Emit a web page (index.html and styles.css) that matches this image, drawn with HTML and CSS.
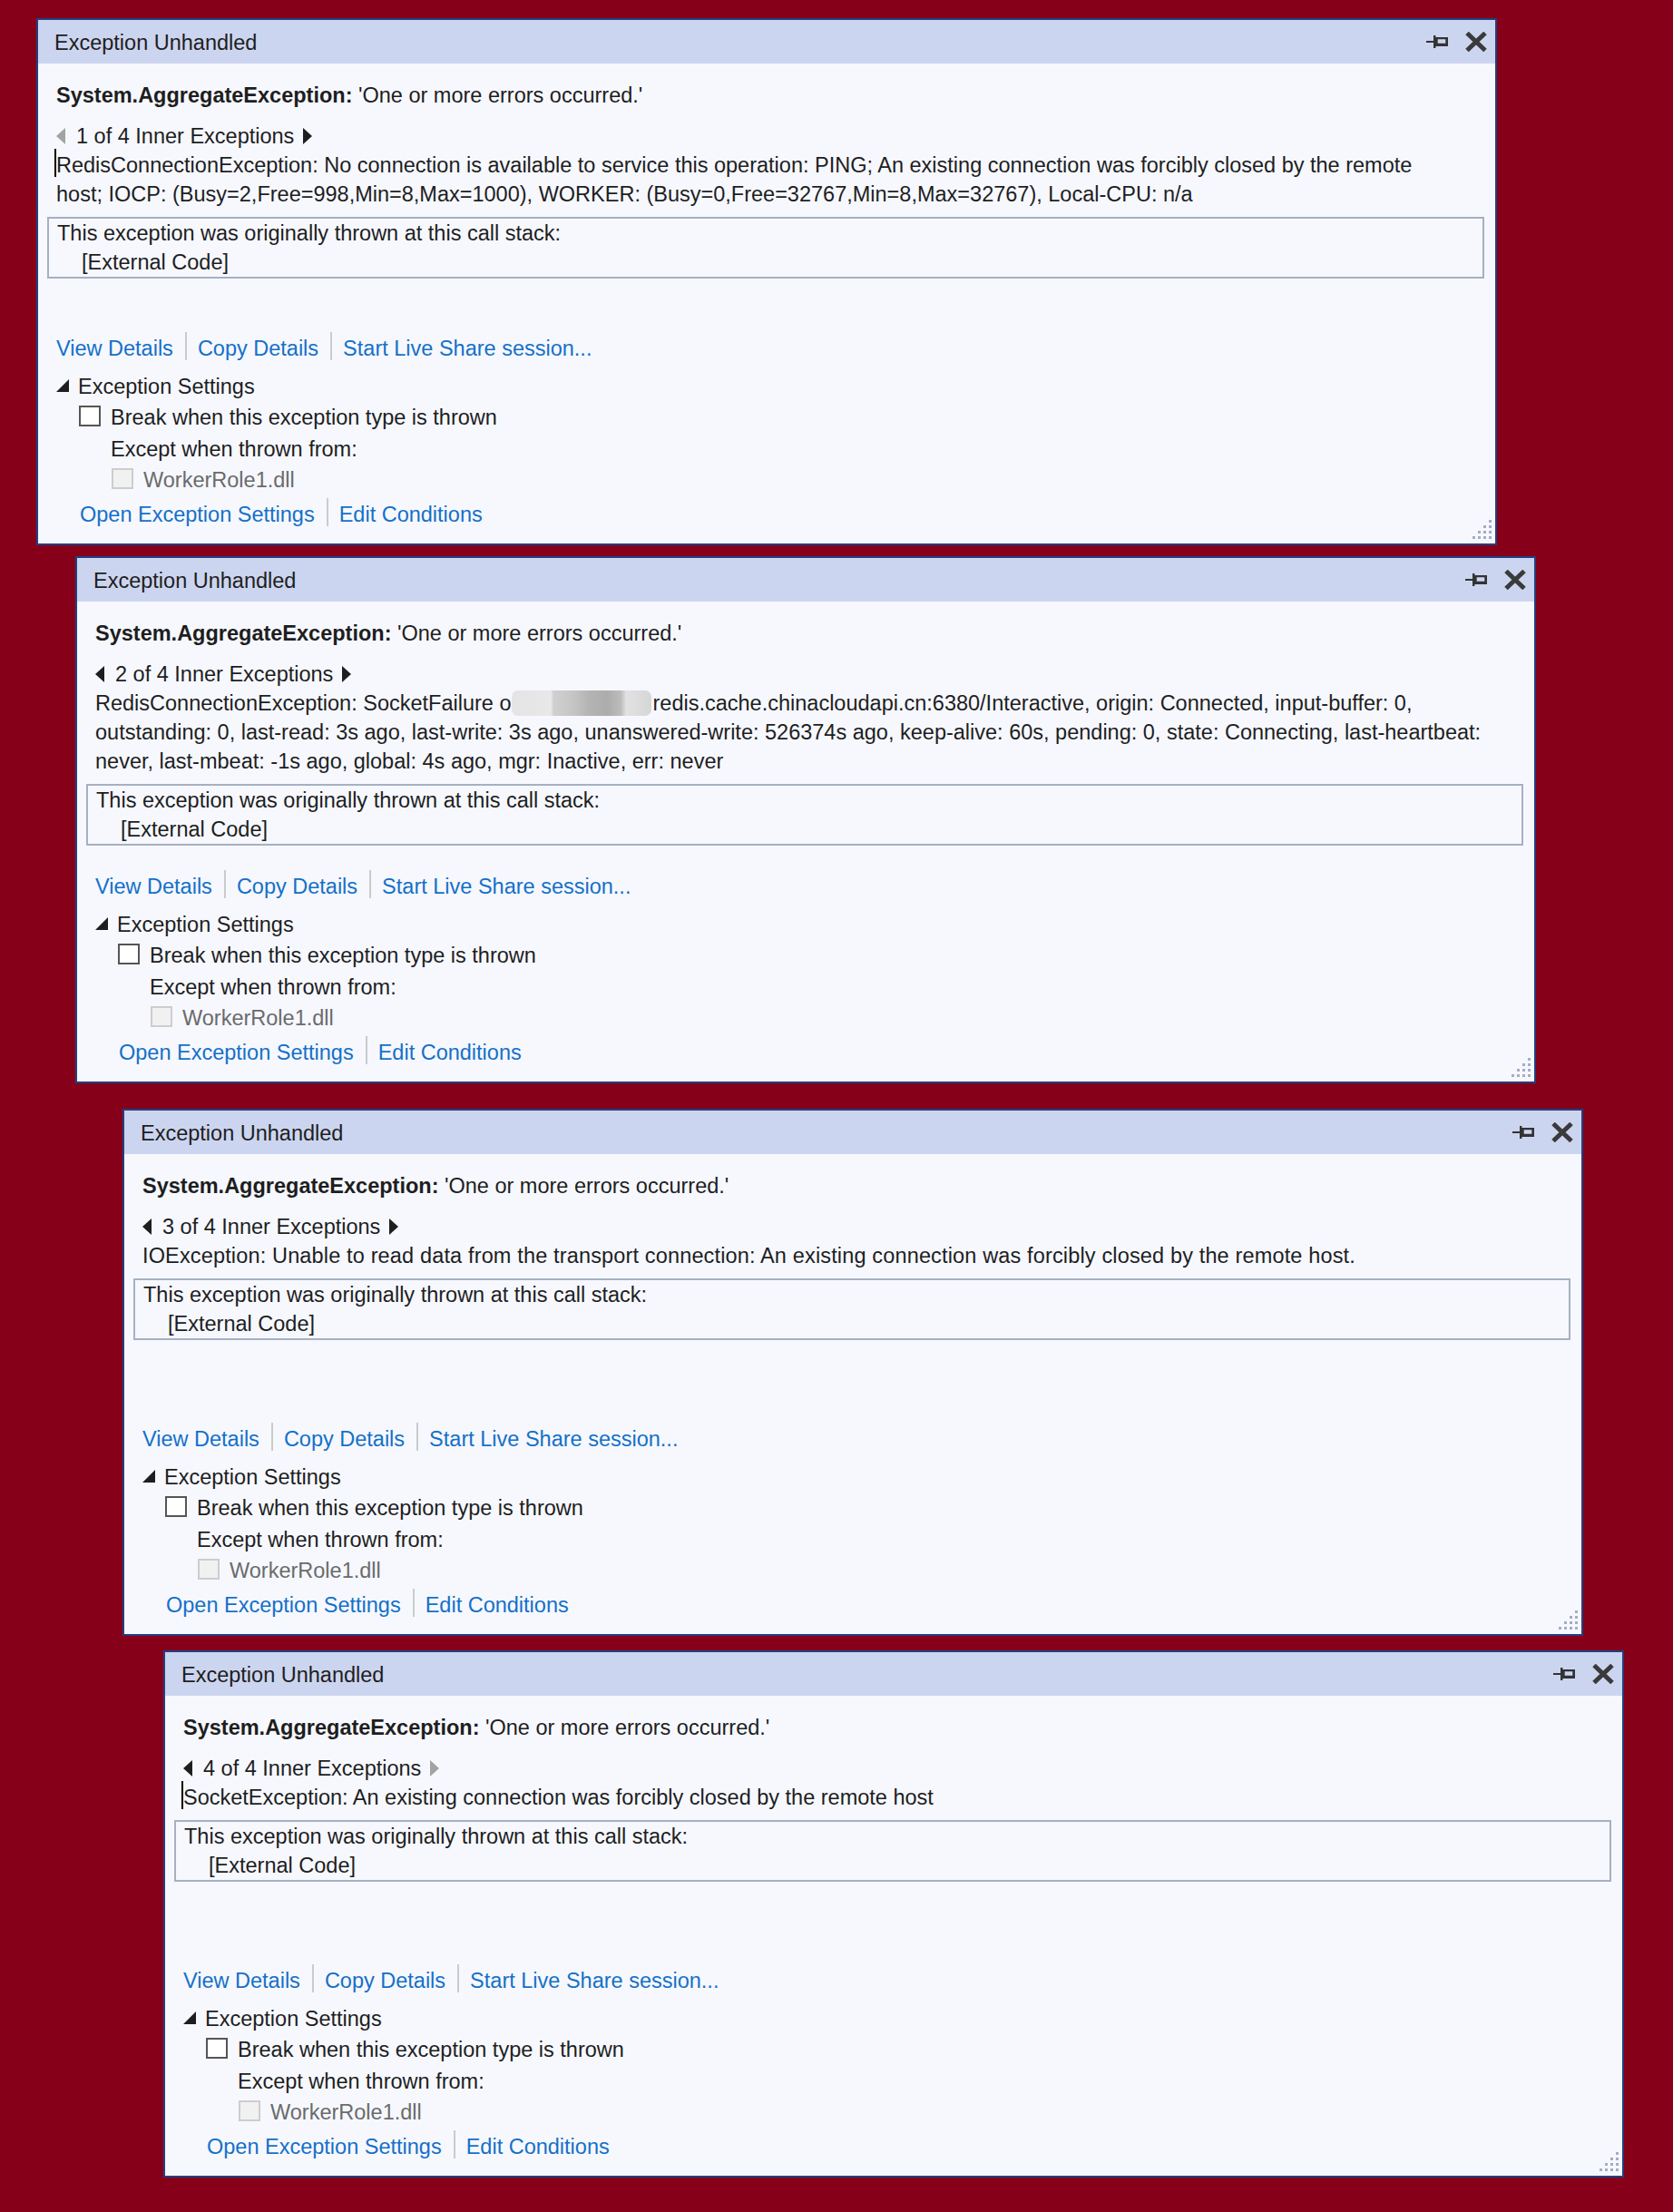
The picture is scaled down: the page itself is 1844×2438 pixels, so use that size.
FILE: index.html
```html
<!DOCTYPE html>
<html>
<head>
<meta charset="utf-8">
<link rel="stylesheet" href="styles.css">
</head>
<body>
<div class="page">

  <!-- Panel 1 -->
  <section class="panel p1">
    <div class="titlebar">
      <span class="title">Exception Unhandled</span>
      <svg class="pin" width="25" height="15" viewBox="0 0 25 15"><rect x="0" y="6" width="9" height="2" fill="#333"/><rect x="8" y="0" width="2.4" height="14" fill="#333"/><path fill="#333" fill-rule="evenodd" d="M10 2h14v10h-14z M12.7 4.3v4.4h8.6v-4.4z"/></svg>
      <svg class="close" width="26" height="22" viewBox="0 0 26 22"><path d="M3 1.5 L23 20.5 M23 1.5 L3 20.5" stroke="#3a3a3a" stroke-width="5"/></svg>
    </div>
    <div class="content">
      <div class="top">
        <div class="hdr"><b>System.AggregateException:</b> 'One or more errors occurred.'</div>
        <div class="nav">
          <svg class="arr" width="10" height="18" viewBox="0 0 10 18"><polygon points="10,0 10,18 0,9" fill="#a3a3a3"/></svg>
          <span class="navtext">1 of 4 Inner Exceptions</span>
          <svg class="arr" width="10" height="18" viewBox="0 0 10 18"><polygon points="0,0 0,18 10,9" fill="#1e1e1e"/></svg>
        </div>
        <div class="detail">
          <span class="caret"></span>
          <span class="ln">RedisConnectionException: No connection is available to service this operation: PING; An existing connection was forcibly closed by the remote</span>
          <span class="ln">host; IOCP: (Busy=2,Free=998,Min=8,Max=1000), WORKER: (Busy=0,Free=32767,Min=8,Max=32767), Local-CPU: n/a</span>
        </div>
        <div class="stack">
          <div>This exception was originally thrown at this call stack:</div>
          <div class="ext">[External Code]</div>
        </div>
      </div>
      <div class="bottom">
        <div class="links"><a>View Details</a><span class="sep"></span><a>Copy Details</a><span class="sep"></span><a>Start Live Share session...</a></div>
        <div class="settings"><svg class="tri" width="14" height="14" viewBox="0 0 14 14"><polygon points="14,0 14,14 0,14" fill="#1e1e1e"/></svg><span>Exception Settings</span></div>
        <div class="brk"><span class="cb"></span><span>Break when this exception type is thrown</span></div>
        <div class="except">Except when thrown from:</div>
        <div class="worker"><span class="cb dis"></span><span>WorkerRole1.dll</span></div>
        <div class="links open"><a>Open Exception Settings</a><span class="sep"></span><a>Edit Conditions</a></div>
      </div>
    </div>
    <svg class="grip" width="22" height="22" viewBox="0 0 22 22"><g fill="#a2aec6"><rect x="19" y="0" width="3" height="3"/><rect x="13" y="6" width="3" height="3"/><rect x="19" y="6" width="3" height="3"/><rect x="7" y="12" width="3" height="3"/><rect x="13" y="12" width="3" height="3"/><rect x="19" y="12" width="3" height="3"/><rect x="1" y="18" width="3" height="3"/><rect x="7" y="18" width="3" height="3"/><rect x="13" y="18" width="3" height="3"/><rect x="19" y="18" width="3" height="3"/></g></svg>
  </section>

  <!-- Panel 2 -->
  <section class="panel p2">
    <div class="titlebar">
      <span class="title">Exception Unhandled</span>
      <svg class="pin" width="25" height="15" viewBox="0 0 25 15"><rect x="0" y="6" width="9" height="2" fill="#333"/><rect x="8" y="0" width="2.4" height="14" fill="#333"/><path fill="#333" fill-rule="evenodd" d="M10 2h14v10h-14z M12.7 4.3v4.4h8.6v-4.4z"/></svg>
      <svg class="close" width="26" height="22" viewBox="0 0 26 22"><path d="M3 1.5 L23 20.5 M23 1.5 L3 20.5" stroke="#3a3a3a" stroke-width="5"/></svg>
    </div>
    <div class="content">
      <div class="top">
        <div class="hdr"><b>System.AggregateException:</b> 'One or more errors occurred.'</div>
        <div class="nav">
          <svg class="arr" width="10" height="18" viewBox="0 0 10 18"><polygon points="10,0 10,18 0,9" fill="#1e1e1e"/></svg>
          <span class="navtext">2 of 4 Inner Exceptions</span>
          <svg class="arr" width="10" height="18" viewBox="0 0 10 18"><polygon points="0,0 0,18 10,9" fill="#1e1e1e"/></svg>
        </div>
        <div class="detail">
          <span class="ln">RedisConnectionException: SocketFailure o<span class="blur"></span>redis.cache.chinacloudapi.cn:6380/Interactive, origin: Connected, input-buffer: 0,</span>
          <span class="ln">outstanding: 0, last-read: 3s ago, last-write: 3s ago, unanswered-write: 526374s ago, keep-alive: 60s, pending: 0, state: Connecting, last-heartbeat:</span>
          <span class="ln">never, last-mbeat: -1s ago, global: 4s ago, mgr: Inactive, err: never</span>
        </div>
        <div class="stack">
          <div>This exception was originally thrown at this call stack:</div>
          <div class="ext">[External Code]</div>
        </div>
      </div>
      <div class="bottom">
        <div class="links"><a>View Details</a><span class="sep"></span><a>Copy Details</a><span class="sep"></span><a>Start Live Share session...</a></div>
        <div class="settings"><svg class="tri" width="14" height="14" viewBox="0 0 14 14"><polygon points="14,0 14,14 0,14" fill="#1e1e1e"/></svg><span>Exception Settings</span></div>
        <div class="brk"><span class="cb"></span><span>Break when this exception type is thrown</span></div>
        <div class="except">Except when thrown from:</div>
        <div class="worker"><span class="cb dis"></span><span>WorkerRole1.dll</span></div>
        <div class="links open"><a>Open Exception Settings</a><span class="sep"></span><a>Edit Conditions</a></div>
      </div>
    </div>
    <svg class="grip" width="22" height="22" viewBox="0 0 22 22"><g fill="#a2aec6"><rect x="19" y="0" width="3" height="3"/><rect x="13" y="6" width="3" height="3"/><rect x="19" y="6" width="3" height="3"/><rect x="7" y="12" width="3" height="3"/><rect x="13" y="12" width="3" height="3"/><rect x="19" y="12" width="3" height="3"/><rect x="1" y="18" width="3" height="3"/><rect x="7" y="18" width="3" height="3"/><rect x="13" y="18" width="3" height="3"/><rect x="19" y="18" width="3" height="3"/></g></svg>
  </section>

  <!-- Panel 3 -->
  <section class="panel p3">
    <div class="titlebar">
      <span class="title">Exception Unhandled</span>
      <svg class="pin" width="25" height="15" viewBox="0 0 25 15"><rect x="0" y="6" width="9" height="2" fill="#333"/><rect x="8" y="0" width="2.4" height="14" fill="#333"/><path fill="#333" fill-rule="evenodd" d="M10 2h14v10h-14z M12.7 4.3v4.4h8.6v-4.4z"/></svg>
      <svg class="close" width="26" height="22" viewBox="0 0 26 22"><path d="M3 1.5 L23 20.5 M23 1.5 L3 20.5" stroke="#3a3a3a" stroke-width="5"/></svg>
    </div>
    <div class="content">
      <div class="top">
        <div class="hdr"><b>System.AggregateException:</b> 'One or more errors occurred.'</div>
        <div class="nav">
          <svg class="arr" width="10" height="18" viewBox="0 0 10 18"><polygon points="10,0 10,18 0,9" fill="#1e1e1e"/></svg>
          <span class="navtext">3 of 4 Inner Exceptions</span>
          <svg class="arr" width="10" height="18" viewBox="0 0 10 18"><polygon points="0,0 0,18 10,9" fill="#1e1e1e"/></svg>
        </div>
        <div class="detail">
          <span class="ln wide">IOException: Unable to read data from the transport connection: An existing connection was forcibly closed by the remote host.</span>
        </div>
        <div class="stack">
          <div>This exception was originally thrown at this call stack:</div>
          <div class="ext">[External Code]</div>
        </div>
      </div>
      <div class="bottom">
        <div class="links"><a>View Details</a><span class="sep"></span><a>Copy Details</a><span class="sep"></span><a>Start Live Share session...</a></div>
        <div class="settings"><svg class="tri" width="14" height="14" viewBox="0 0 14 14"><polygon points="14,0 14,14 0,14" fill="#1e1e1e"/></svg><span>Exception Settings</span></div>
        <div class="brk"><span class="cb"></span><span>Break when this exception type is thrown</span></div>
        <div class="except">Except when thrown from:</div>
        <div class="worker"><span class="cb dis"></span><span>WorkerRole1.dll</span></div>
        <div class="links open"><a>Open Exception Settings</a><span class="sep"></span><a>Edit Conditions</a></div>
      </div>
    </div>
    <svg class="grip" width="22" height="22" viewBox="0 0 22 22"><g fill="#a2aec6"><rect x="19" y="0" width="3" height="3"/><rect x="13" y="6" width="3" height="3"/><rect x="19" y="6" width="3" height="3"/><rect x="7" y="12" width="3" height="3"/><rect x="13" y="12" width="3" height="3"/><rect x="19" y="12" width="3" height="3"/><rect x="1" y="18" width="3" height="3"/><rect x="7" y="18" width="3" height="3"/><rect x="13" y="18" width="3" height="3"/><rect x="19" y="18" width="3" height="3"/></g></svg>
  </section>

  <!-- Panel 4 -->
  <section class="panel p4">
    <div class="titlebar">
      <span class="title">Exception Unhandled</span>
      <svg class="pin" width="25" height="15" viewBox="0 0 25 15"><rect x="0" y="6" width="9" height="2" fill="#333"/><rect x="8" y="0" width="2.4" height="14" fill="#333"/><path fill="#333" fill-rule="evenodd" d="M10 2h14v10h-14z M12.7 4.3v4.4h8.6v-4.4z"/></svg>
      <svg class="close" width="26" height="22" viewBox="0 0 26 22"><path d="M3 1.5 L23 20.5 M23 1.5 L3 20.5" stroke="#3a3a3a" stroke-width="5"/></svg>
    </div>
    <div class="content">
      <div class="top">
        <div class="hdr"><b>System.AggregateException:</b> 'One or more errors occurred.'</div>
        <div class="nav">
          <svg class="arr" width="10" height="18" viewBox="0 0 10 18"><polygon points="10,0 10,18 0,9" fill="#1e1e1e"/></svg>
          <span class="navtext">4 of 4 Inner Exceptions</span>
          <svg class="arr" width="10" height="18" viewBox="0 0 10 18"><polygon points="0,0 0,18 10,9" fill="#a3a3a3"/></svg>
        </div>
        <div class="detail">
          <span class="caret"></span>
          <span class="ln">SocketException: An existing connection was forcibly closed by the remote host</span>
        </div>
        <div class="stack">
          <div>This exception was originally thrown at this call stack:</div>
          <div class="ext">[External Code]</div>
        </div>
      </div>
      <div class="bottom">
        <div class="links"><a>View Details</a><span class="sep"></span><a>Copy Details</a><span class="sep"></span><a>Start Live Share session...</a></div>
        <div class="settings"><svg class="tri" width="14" height="14" viewBox="0 0 14 14"><polygon points="14,0 14,14 0,14" fill="#1e1e1e"/></svg><span>Exception Settings</span></div>
        <div class="brk"><span class="cb"></span><span>Break when this exception type is thrown</span></div>
        <div class="except">Except when thrown from:</div>
        <div class="worker"><span class="cb dis"></span><span>WorkerRole1.dll</span></div>
        <div class="links open"><a>Open Exception Settings</a><span class="sep"></span><a>Edit Conditions</a></div>
      </div>
    </div>
    <svg class="grip" width="22" height="22" viewBox="0 0 22 22"><g fill="#a2aec6"><rect x="19" y="0" width="3" height="3"/><rect x="13" y="6" width="3" height="3"/><rect x="19" y="6" width="3" height="3"/><rect x="7" y="12" width="3" height="3"/><rect x="13" y="12" width="3" height="3"/><rect x="19" y="12" width="3" height="3"/><rect x="1" y="18" width="3" height="3"/><rect x="7" y="18" width="3" height="3"/><rect x="13" y="18" width="3" height="3"/><rect x="19" y="18" width="3" height="3"/></g></svg>
  </section>

</div>
</body>
</html>
```

FILE: styles.css
```css
* { box-sizing: border-box; }

html, body {
  margin: 0;
  padding: 0;
}

body {
  background: #87001a;
  font-family: "Liberation Sans", Arial, sans-serif;
  font-size: 23.5px;
  color: #1e1e1e;
}

.page {
  display: flex;
  flex-direction: column;
  align-items: flex-start;
  padding-top: 20px;
  min-height: 2438px;
}

.panel {
  position: relative;
  width: 1610px;
  height: 581px;
  border: 2px solid #213f80;
  background: #f6f8fe;
  display: flex;
  flex-direction: column;
  line-height: 32px;
}

.p1 { margin-left: 40px; }
.p2 { margin-left: 83px; margin-top: 12px; }
.p3 { margin-left: 135px; margin-top: 28px; }
.p4 { margin-left: 180px; margin-top: 16px; }

/* title bar */
.titlebar {
  height: 48px;
  flex: none;
  background: #ccd5f0;
  display: flex;
  align-items: center;
  padding: 0 8px 0 18px;
}

.title {
  flex: 1;
  padding-top: 3px;
  line-height: 45px;
  color: #1e1e1e;
}

.pin { margin-right: 17px; }

/* content */
.content {
  flex: 1;
  display: flex;
  flex-direction: column;
  padding: 19px 12px 16px 10px;
}

.hdr { margin-left: 10px; white-space: nowrap; }
.hdr b { font-weight: bold; }

.nav {
  margin-top: 13px;
  margin-left: 10px;
  display: flex;
  align-items: center;
  height: 32px;
}

.navtext { margin: 0 10px 0 12px; }

.detail {
  position: relative;
  margin-left: 10px;
}

.ln {
  display: block;
  white-space: nowrap;
}

.ln.wide { letter-spacing: 0.15px; }

.caret {
  position: absolute;
  left: -2px;
  top: -2px;
  width: 2px;
  height: 31px;
  background: #000;
}

.blur {
  display: inline-block;
  width: 154px;
  height: 28px;
  vertical-align: -6px;
  margin: 0 2px 0 0;
  border-radius: 7px;
  background: linear-gradient(to right,
    #e4e4e4 0, #e8e8e8 28%, #d0d0d0 30%, #c4c4c4 45%, #b4b4b4 55%, #acacac 68%, #bcbcbc 78%, #e2e2e2 82%, #d6d6d6 100%);
}

.stack {
  margin-top: 9px;
  border: 2px solid #a6b0c2;
  padding: 0 9px;
}

.ext { padding-left: 27px; }

/* bottom section */
.bottom { margin-top: auto; }

.links {
  margin-left: 10px;
  height: 32px;
  display: flex;
  align-items: center;
}

.links a {
  color: #1570c8;
  text-decoration: none;
  cursor: pointer;
}

.sep {
  width: 2px;
  height: 31px;
  background: #cbcbcb;
  margin: 0 12px 5px 13px;
}

.settings {
  margin-top: 10px;
  margin-left: 10px;
  height: 32px;
  display: flex;
  align-items: center;
}

.tri { margin-right: 10px; margin-top: -2px; }

.brk {
  margin-top: 2px;
  margin-left: 35px;
  height: 32px;
  display: flex;
  align-items: center;
}

.cb {
  width: 24px;
  height: 23px;
  border: 2px solid #555;
  background: #fff;
  margin-right: 11px;
  margin-top: -3px;
}

.cb.dis {
  border-color: #cdcdcd;
  background: #f1f1f1;
}

.except {
  margin-top: 3px;
  margin-left: 70px;
}

.worker {
  margin-top: 2px;
  margin-left: 71px;
  height: 32px;
  display: flex;
  align-items: center;
  color: #6b6b6b;
}

.open {
  margin-top: 6px;
  margin-left: 36px;
}

.grip {
  position: absolute;
  right: 4px;
  bottom: 4px;
}
```
